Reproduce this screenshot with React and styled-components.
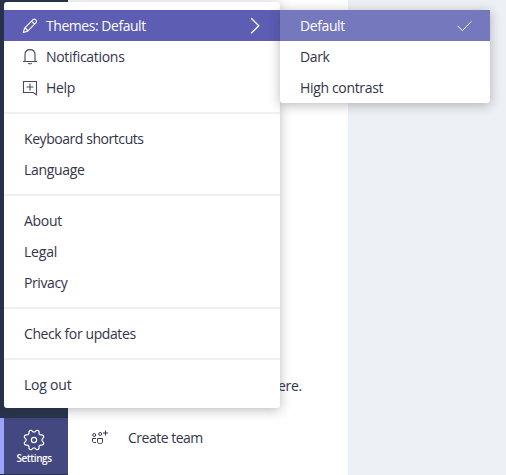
import React from "react";
import styled, { createGlobalStyle } from "styled-components";

const Global = createGlobalStyle`
  * { box-sizing: border-box; }
  html, body { margin: 0; overflow: hidden; }
  body { font-family: "Open Sans", "Noto Sans", sans-serif; font-size: 14px; color: #33344a; }
`;

const Screen = styled.div`
  position: relative;
  display: flex;
  width: 506px;
  height: 475px;
  overflow: hidden;
  background: #edf0f5;
`;
const Rail = styled.nav`
  width: 68px;
  display: flex;
  flex-direction: column;
  justify-content: flex-end;
  background: #28344c;
  padding-bottom: 1px;
`;
const RailButton = styled.div`
  height: 56px;
  display: flex;
  flex-direction: column;
  align-items: center;
  padding: 11px 4px 0 0;
  border-left: 4px solid #9ea2ff;
  background: #434880;
  color: #fff;
`;
const RailLabel = styled.span`
  font-size: 10px;
  line-height: 14px;
  font-weight: 600;
  letter-spacing: -0.45px;
`;
const Panel = styled.main`
  width: 280px;
  display: flex;
  flex-direction: column;
  justify-content: flex-end;
  background: #fff;
`;
const Hint = styled.div`
  padding-right: 46px;
  text-align: right;
  line-height: 20px;
  white-space: nowrap;
`;
const TeamRow = styled.div`
  height: 31px;
  margin: 26px 0 22px;
  padding-left: 23px;
  display: flex;
  align-items: center;
  gap: 19px;
`;
const Menu = styled.div`
  position: absolute;
  left: 4px;
  top: 2px;
  width: 276px;
  padding: 8px 0;
  border-radius: 3px;
  background: #fff;
  box-shadow: 0 2px 12px rgba(37, 36, 50, 0.32);
`;
const SubMenu = styled.div`
  position: absolute;
  left: 280px;
  top: 10px;
  width: 210px;
  border-radius: 0 0 3px 3px;
  overflow: hidden;
  background: #fff;
  box-shadow: 0 2px 12px rgba(37, 36, 50, 0.32);
`;
const Item = styled.div`
  height: 31px;
  padding: 0 ${(p) => (p.$icon ? 20 : 18)}px 0 ${(p) => (p.$icon ? 18 : 20)}px;
  display: flex;
  align-items: center;
  background: ${(p) => p.$bg || "transparent"};
  color: ${(p) => (p.$bg ? "#fff" : "inherit")};
  font-weight: ${(p) => (p.$bg ? 500 : 400)};
`;
const IconSlot = styled.span`
  width: 24px;
  display: flex;
  color: ${(p) => (p.$light ? "#fff" : "#4a4b60")};
`;
const Text = styled.span`
  flex: ${(p) => (p.$fill ? 1 : "none")};
  white-space: nowrap;
  letter-spacing: ${(p) => p.$ls ?? -0.3}px;
`;
const Divider = styled.hr`
  height: 2px;
  margin: 9px 0;
  border: 0;
  background: #f0f0f2;
`;
const Icon = styled.svg`
  display: block;
  flex: none;
  fill: none;
  stroke: currentColor;
  stroke-width: ${(p) => p.$w || 1};
`;

const Pencil = () => (
  <Icon width="16" height="17" viewBox="0 0 16 17" $w={1.1}>
    <path d="M1.400 15.500 2.500 11.300 11 2.700a1.800 1.800 0 0 1 2.500 0l.5.500a1.800 1.800 0 0 1 0 2.500L5.500 14.300ZM9.500 4.200l3 3M2.500 11.300c1.700.1 2.800 1.200 3 3" />
  </Icon>
);
const Bell = () => (
  <Icon width="16" height="17" viewBox="0 0 16 17" $w={1.15}>
    <path d="M1 13.500h14M3 13.500V6.800C3 3.600 5 1.600 8 1.600s5 2 5 5.200v6.700M6.200 15c.8 1.200 2.800 1.200 3.600 0" />
  </Icon>
);
const Help = () => (
  <Icon width="16" height="17" viewBox="0 0 16 17" $w={1.1}>
    <path d="M1.500 2.500h13v13.200l-3.400-2.200H1.500ZM8 4.500v7M4.500 8h7" />
  </Icon>
);
const Chevron = () => (
  <Icon width="10" height="17" viewBox="0 0 10 17" $w={1.3}>
    <path d="M1.200 1.300 8.800 8.800 1.200 16.300" />
  </Icon>
);
const Check = () => (
  <Icon width="15" height="13" viewBox="0 0 15 13">
    <path d="M.6 6.800 5.400 11.600 14.400 2.400" />
  </Icon>
);

const gearPath =
  "M" +
  Array.from({ length: 96 }, (_, i) => {
    const a = (i / 96) * Math.PI * 2;
    const r = 9.1 - 1.25 * Math.tanh(1.6 * Math.cos(8 * a));
    return `${(11 + r * Math.cos(a)).toFixed(2)} ${(11 + r * Math.sin(a)).toFixed(2)}`;
  }).join("L") +
  "Z";
const Gear = () => (
  <Icon width="22" height="22" viewBox="0 0 22 22" $w={1.2} strokeLinejoin="round">
    <path d={gearPath} />
    <circle cx="11" cy="11" r="2.6" />
  </Icon>
);
const Team = () => (
  <Icon width="18" height="15" viewBox="0 0 18 15">
    <circle cx="3.200" cy="5" r="1.500" />
    <circle cx="9.200" cy="4" r="1.500" />
    <path d="M5 8.500H1.500v2.500c0 1 .7 1.500 1.700 1.500H5M6.500 8.500h5v3.300c0 1.200-.8 1.700-2 1.700h-1c-1.200 0-2-.5-2-1.700ZM14.500.5v5M12 3h5" />
  </Icon>
);

const groups = [
  [["Keyboard shortcuts", -0.44], ["Language", -0.33]],
  [["About", -0.3], ["Legal", -0.2], ["Privacy", -0.4]],
  [["Check for updates", -0.4]],
  [["Log out", -0.22]],
];

export default function App() {
  return (
    <>
      <Global />
      <Screen>
        <Rail>
          <RailButton>
            <Gear />
            <RailLabel>Settings</RailLabel>
          </RailButton>
        </Rail>
        <Panel>
          <Hint><Text>ere.</Text></Hint>
          <TeamRow>
            <Team />
            <Text $ls={-0.5}>Create team</Text>
          </TeamRow>
        </Panel>
        <Menu>
          <Item $icon $bg="#5c5db3">
            <IconSlot $light><Pencil /></IconSlot>
            <Text $fill $ls={-0.46}>Themes: Default</Text>
            <Chevron />
          </Item>
          <Item $icon>
            <IconSlot><Bell /></IconSlot>
            <Text>Notifications</Text>
          </Item>
          <Item $icon>
            <IconSlot><Help /></IconSlot>
            <Text>Help</Text>
          </Item>
          {groups.map((items, i) => (
            <React.Fragment key={i}>
              <Divider />
              {items.map(([label, ls]) => (
                <Item key={label}><Text $ls={ls}>{label}</Text></Item>
              ))}
            </React.Fragment>
          ))}
        </Menu>
        <SubMenu>
          <Item $bg="#7678bd">
            <Text $fill $ls={-0.4}>Default</Text>
            <Check />
          </Item>
          <Item><Text $ls={-0.4}>Dark</Text></Item>
          <Item><Text $ls={-0.34}>High contrast</Text></Item>
        </SubMenu>
      </Screen>
    </>
  );
}
